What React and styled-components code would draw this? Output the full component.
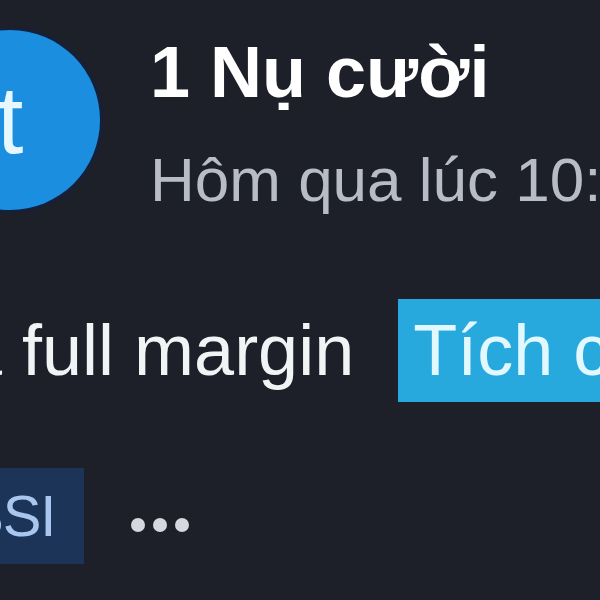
import React from 'react'
import styled, { createGlobalStyle } from 'styled-components'

const Global = createGlobalStyle`
    html, body {
        margin: 0;
        padding: 0;
        background: #1d1f29;
        overflow: hidden;
    }
    body {
        font-family: "Liberation Sans", Arial, sans-serif;
    }
`

const Page = styled.div`
    width: 600px;
    height: 600px;
    overflow: hidden;
    background: #1d1f29;
`

const Post = styled.div`
    margin-left: -80px;
    padding-top: 30px;
    display: flex;
    flex-direction: column;
`

const Header = styled.div`
    display: flex;
    align-items: flex-start;
    gap: 50px;
`

const Avatar = styled.div`
    width: 180px;
    height: 180px;
    flex-shrink: 0;
    border-radius: 50%;
    background: #1b8ee0;
    color: #e6f7ff;
    font-size: 96px;
    line-height: 180px;
    text-align: center;
    box-shadow: 0 0 0 3px #15203a;
`

const Meta = styled.div`
    display: flex;
    flex-direction: column;
    white-space: nowrap;
`

const Name = styled.div`
    margin-top: 6px;
    font-size: 72px;
    line-height: 1;
    font-weight: 700;
    color: #ffffff;
`

const Time = styled.div`
    margin-top: 41px;
    font-size: 62px;
    line-height: 1;
    color: #b8bcc4;
`

const Body = styled.div`
    margin-top: 88px;
    margin-left: -58px;
    display: flex;
    align-items: center;
    gap: 44px;
    white-space: nowrap;
    font-size: 72px;
    line-height: 1.15;
`

const Text = styled.span`
    color: #f2f3f5;
`

const Highlight = styled.span`
    padding: 10px 15px;
    background: #27a9de;
    color: #e2f8ff;
`

const Footer = styled.div`
    margin-top: 66px;
    margin-left: 15px;
    display: flex;
    align-items: center;
    gap: 47px;
`

const Tag = styled.span`
    padding: 15px 28px 15px 30px;
    background: #1c3457;
    color: #a9c6ee;
    font-size: 58px;
    line-height: 1.15;
    letter-spacing: -1px;
`

const More = styled.div`
    display: flex;
    gap: 8px;
    margin-top: 18px;
`

const Dot = styled.span`
    width: 14px;
    height: 14px;
    border-radius: 50%;
    background: #d5d8de;
`

const App = () => {
    return (
        <Page>
            <Global />
            <Post>
                <Header>
                    <Avatar>t</Avatar>
                    <Meta>
                        <Name>1 Nụ cười</Name>
                        <Time>Hôm qua lúc 10:24</Time>
                    </Meta>
                </Header>
                <Body>
                    <Text>Mua full margin</Text>
                    <Highlight>Tích cực</Highlight>
                </Body>
                <Footer>
                    <Tag>SSI</Tag>
                    <More>
                        <Dot />
                        <Dot />
                        <Dot />
                    </More>
                </Footer>
            </Post>
        </Page>
    )
}

export default App
